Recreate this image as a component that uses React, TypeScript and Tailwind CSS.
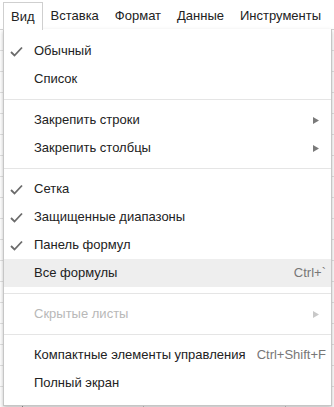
import React from "react";

type Item =
  | { type: "sep" }
  | {
      type: "item";
      label: string;
      checked?: boolean;
      shortcut?: string;
      sub?: boolean;
      disabled?: boolean;
      active?: boolean;
    };

const items: Item[] = [
  { type: "item", label: "Обычный", checked: true },
  { type: "item", label: "Список" },
  { type: "sep" },
  { type: "item", label: "Закрепить строки", sub: true },
  { type: "item", label: "Закрепить столбцы", sub: true },
  { type: "sep" },
  { type: "item", label: "Сетка", checked: true },
  { type: "item", label: "Защищенные диапазоны", checked: true },
  { type: "item", label: "Панель формул", checked: true },
  { type: "item", label: "Все формулы", shortcut: "Ctrl+`", active: true },
  { type: "sep" },
  { type: "item", label: "Скрытые листы", sub: true, disabled: true },
  { type: "sep" },
  { type: "item", label: "Компактные элементы управления", shortcut: "Ctrl+Shift+F" },
  { type: "item", label: "Полный экран" },
];

const Check = () => (
  <svg width="13" height="11" viewBox="0 0 13 11" className="block">
    <path d="M1 6 L4.5 9.5 L12 1.5" fill="none" stroke="#6b6b6b" strokeWidth="1.8" />
  </svg>
);

const Arrow = ({ light }: { light?: boolean }) => (
  <svg width="6" height="7" viewBox="0 0 6 7" className="block">
    <path d="M0 0 L6 3.5 L0 7 Z" fill={light ? "#c8c8c8" : "#7a7a7a"} />
  </svg>
);

const App = () => {
  const menus = ["Вставка", "Формат", "Данные", "Инструменты"];

  return (
    <div className="relative w-[334px] h-[407px] overflow-hidden bg-white font-['Liberation_Sans',Arial,sans-serif] text-[13px] text-[#222]">
      {/* spreadsheet behind */}
      <div className="absolute left-0 top-[30px] w-full h-[377px] bg-[repeating-linear-gradient(to_bottom,transparent_0px,transparent_20px,#e2e2e2_20px,#e2e2e2_21px)]" />
      <div className="absolute left-[22px] top-[395px] w-px h-[12px] bg-[#999]" />
      <div className="absolute left-[143px] top-[395px] w-px h-[12px] bg-[#ccc]" />
      <div className="absolute left-[285px] top-[395px] w-px h-[12px] bg-[#ccc]" />

      {/* menu bar */}
      <div className="relative flex h-[30px] items-stretch pl-[3px] pt-[2px] bg-white border-b border-[#d4d4d4]">
        <div className="relative z-20 -mb-px px-[7px] flex items-center border border-b-0 border-[#cfcfcf] bg-white">
          Вид
        </div>
        {menus.map((m) => (
          <div key={m} className="px-[8px] flex items-center">
            {m}
          </div>
        ))}
        <div className="ml-[6px] mt-[12px] w-[3px] h-[6px] bg-[#f0c26a]" />
      </div>

      {/* dropdown */}
      <div className="absolute z-10 left-[3px] top-[29px] w-[329px] bg-white border border-t-0 border-[#c6c6c6] shadow-[0_2px_4px_rgba(0,0,0,0.25)] pt-[8px] pb-[8px]">
        {items.map((it, i) =>
          it.type === "sep" ? (
            <div key={i} className="my-[6px] h-px bg-[#e5e5e5]" />
          ) : (
            <div
              key={i}
              className={`flex h-[28px] items-center pr-[5px] ${it.active ? "bg-[#eeeeee]" : ""} ${it.disabled ? "text-[#b8b8b8]" : ""}`}
            >
              <div className="w-[30px] pl-[6px] flex items-center">{it.checked && <Check />}</div>
              <div className="flex-1 whitespace-nowrap">{it.label}</div>
              {it.shortcut && <div className="text-[#777] whitespace-nowrap">{it.shortcut}</div>}
              {it.sub && (
                <div className="pr-[7px]">
                  <Arrow light={it.disabled} />
                </div>
              )}
            </div>
          )
        )}
      </div>
    </div>
  );
};

export default App;
